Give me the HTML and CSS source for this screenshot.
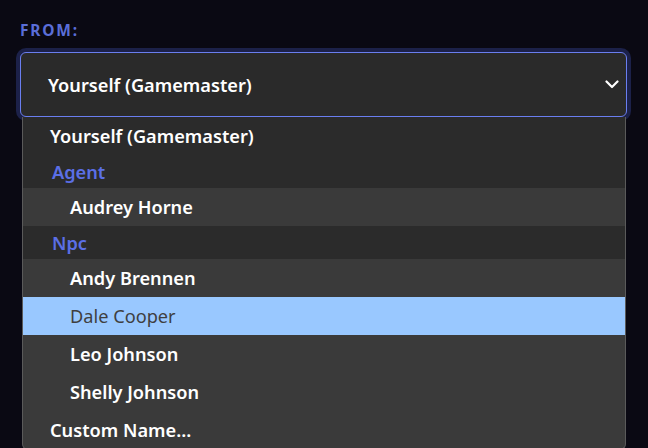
FILE: index.html
```html
<!DOCTYPE html>
<html lang="en">
<head>
<meta charset="utf-8">
<title>From</title>
<link rel="stylesheet" href="styles.css">
</head>
<body>
<div class="field">
  <div class="label">FROM:</div>
  <div class="select-wrap">
    <div class="select">
      <span class="value">Yourself (Gamemaster)</span>
      <svg class="chev" width="14" height="9" viewBox="0 0 14 9"><path d="M1.5 1.5 L7 7 L12.5 1.5" fill="none" stroke="#ffffff" stroke-width="2.2" stroke-linecap="round" stroke-linejoin="round"/></svg>
    </div>
    <ul class="menu">
      <li class="opt top">Yourself (Gamemaster)</li>
      <li class="group">Agent</li>
      <li class="opt sub">Audrey Horne</li>
      <li class="group">Npc</li>
      <li class="opt sub">Andy Brennen</li>
      <li class="opt sub selected">Dale Cooper</li>
      <li class="opt sub">Leo Johnson</li>
      <li class="opt sub">Shelly Johnson</li>
      <li class="opt">Custom Name...</li>
    </ul>
  </div>
</div>
</body>
</html>
```

FILE: styles.css
```css
html, body {
  margin: 0;
  padding: 0;
  background: #0a0913;
  height: 100%;
  overflow: hidden;
}
body {
  font-family: "Noto Sans", "Open Sans", sans-serif;
}
.field {
  padding: 19px 21px 0 20px;
}
.label {
  color: #5a6ed8;
  font-weight: 700;
  font-size: 15.5px;
  letter-spacing: 1.8px;
  line-height: 22px;
  margin-bottom: 11px;
}
.select-wrap {
  position: relative;
}
.select {
  height: 63px;
  border: 1px solid #6a7ef0;
  border-radius: 6px;
  background: #2a2a2a;
  box-shadow: 0 0 0 4px #1c2149;
  display: flex;
  align-items: center;
  justify-content: space-between;
  padding: 0 7px 0 27px;
}
.value {
  color: #ffffff;
  font-weight: 600;
  font-size: 18.2px;
}
.chev {
  display: block;
}
.menu {
  position: absolute;
  left: 2px;
  right: 1px;
  top: 65px;
  margin: 0;
  padding: 0;
  list-style: none;
  background: #3a3a3a;
  border: 1px solid #5a5a5a;
  border-top: none;
  border-radius: 0 0 6px 6px;
  overflow: hidden;
}
.opt, .group {
  font-size: 18.2px;
  font-weight: 600;
  color: #ffffff;
  padding-left: 27px;
  display: flex;
  align-items: center;
}
.opt {
  height: 38px;
}
.opt.top {
  background: #2b2b2b;
}
.group {
  height: 33px;
  background: #2b2b2b;
  color: #5b6fe6;
  padding-left: 29px;
}
.opt.sub {
  padding-left: 47px;
}
.opt.selected {
  background: #99c8ff;
  color: #3f3f3f;
  font-weight: 400;
}
```
